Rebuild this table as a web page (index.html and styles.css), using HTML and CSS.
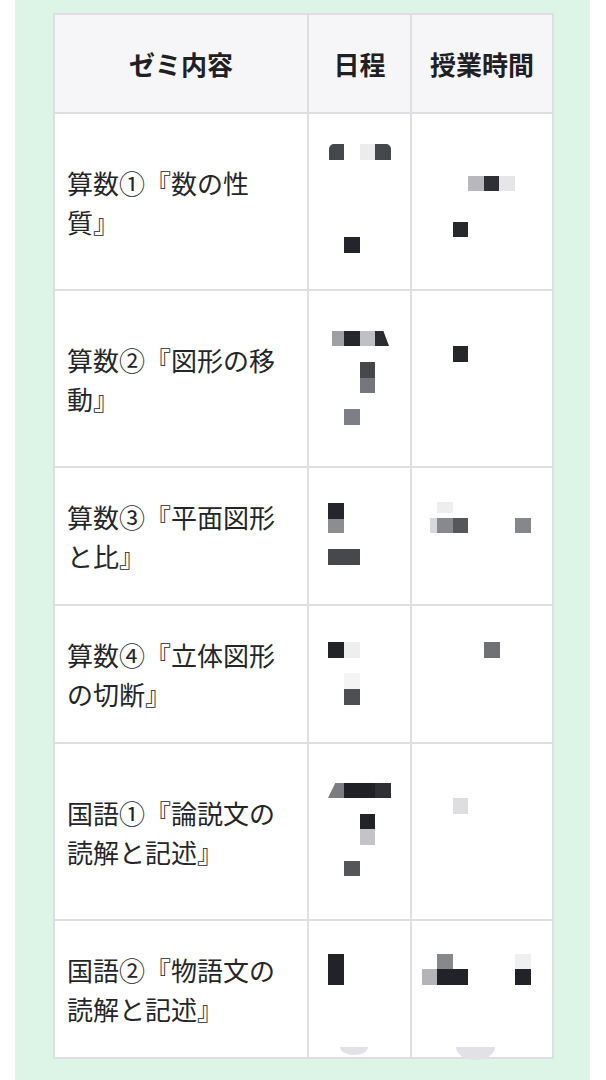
FILE: index.html
```html
<!DOCTYPE html>
<html lang="ja">
<head>
<meta charset="utf-8">
<link rel="stylesheet" href="styles.css">
</head>
<body>
<div class="page">
  <div class="panel">
    <table class="zemi">
      <colgroup>
        <col class="c1">
        <col class="c2">
        <col class="c3">
      </colgroup>
      <thead>
        <tr><th>ゼミ内容</th><th>日程</th><th>授業時間</th></tr>
      </thead>
      <tbody>
        <tr class="tall"><td>算数①『数の性質』</td><td></td><td></td></tr>
        <tr class="tall"><td>算数②『図形の移動』</td><td></td><td></td></tr>
        <tr><td>算数③『平面図形と比』</td><td></td><td></td></tr>
        <tr><td>算数④『立体図形の切断』</td><td></td><td></td></tr>
        <tr class="tall"><td>国語①『論説文の読解と記述』</td><td></td><td></td></tr>
        <tr><td>国語②『物語文の読解と記述』</td><td></td><td></td></tr>
      </tbody>
    </table>
  </div>
  <div class="mosaic" aria-hidden="true">
    <i class="m" style="left:329px;top:144px;width:15px;height:16px;background:#45484c;border-top-left-radius:5px"></i>
    <i class="m" style="left:360px;top:144px;width:15px;height:16px;background:#ececec"></i>
    <i class="m" style="left:375px;top:144px;width:16px;height:16px;background:#45484c;border-top-right-radius:5px"></i>
    <i class="m" style="left:344px;top:237px;width:16px;height:16px;background:#23252a"></i>
    <i class="m" style="left:468px;top:176px;width:16px;height:15px;background:#b8b8bc"></i>
    <i class="m" style="left:484px;top:176px;width:15px;height:15px;background:#2e3035"></i>
    <i class="m" style="left:499px;top:176px;width:16px;height:15px;background:#e6e6e8"></i>
    <i class="m" style="left:453px;top:222px;width:15px;height:15px;background:#26282c"></i>

    <i class="m" style="left:332px;top:331px;width:12px;height:15px;background:#a0a0a4"></i>
    <i class="m" style="left:344px;top:331px;width:16px;height:15px;background:#25272c"></i>
    <i class="m" style="left:360px;top:331px;width:15px;height:15px;background:#c0c0c4"></i>
    <i class="m slant-r" style="left:375px;top:331px;width:14px;height:15px;background:#2a2c30"></i>
    <i class="m" style="left:360px;top:362px;width:15px;height:16px;background:#46484c"></i>
    <i class="m" style="left:360px;top:378px;width:15px;height:15px;background:#76777c"></i>
    <i class="m" style="left:344px;top:409px;width:16px;height:16px;background:#7e7f84"></i>
    <i class="m" style="left:453px;top:346px;width:15px;height:16px;background:#25272b"></i>

    <i class="m" style="left:328px;top:503px;width:16px;height:16px;background:#24262b"></i>
    <i class="m" style="left:328px;top:519px;width:16px;height:14px;background:#8c8d91"></i>
    <i class="m" style="left:328px;top:549px;width:32px;height:16px;background:#46484c"></i>
    <i class="m" style="left:437px;top:502px;width:16px;height:11px;background:#eeeeee"></i>
    <i class="m" style="left:430px;top:518px;width:7px;height:15px;background:#d8d8dc"></i>
    <i class="m" style="left:437px;top:518px;width:16px;height:15px;background:#88898d"></i>
    <i class="m" style="left:453px;top:518px;width:15px;height:15px;background:#55575b"></i>
    <i class="m" style="left:515px;top:518px;width:16px;height:15px;background:#86878b"></i>

    <i class="m" style="left:328px;top:642px;width:16px;height:16px;background:#222428"></i>
    <i class="m" style="left:344px;top:642px;width:16px;height:16px;background:#eeeeef"></i>
    <i class="m" style="left:344px;top:673px;width:16px;height:16px;background:#f4f4f4"></i>
    <i class="m" style="left:344px;top:689px;width:16px;height:16px;background:#4d4f53"></i>
    <i class="m" style="left:484px;top:642px;width:16px;height:16px;background:#707175"></i>

    <i class="m slant-l" style="left:328px;top:783px;width:16px;height:15px;background:#7c7d80"></i>
    <i class="m" style="left:344px;top:783px;width:31px;height:15px;background:#1f2126"></i>
    <i class="m" style="left:375px;top:783px;width:16px;height:15px;background:#2e3035"></i>
    <i class="m" style="left:360px;top:814px;width:15px;height:15px;background:#222428"></i>
    <i class="m" style="left:360px;top:829px;width:15px;height:16px;background:#c4c4c6"></i>
    <i class="m" style="left:344px;top:861px;width:16px;height:15px;background:#55565a"></i>
    <i class="m" style="left:453px;top:798px;width:15px;height:16px;background:#dedee0"></i>

    <i class="m" style="left:328px;top:954px;width:16px;height:31px;background:#212328"></i>
    <i class="m" style="left:437px;top:954px;width:16px;height:15px;background:#87888c"></i>
    <i class="m" style="left:422px;top:969px;width:15px;height:16px;background:#b4b4b8"></i>
    <i class="m" style="left:437px;top:969px;width:31px;height:16px;background:#212328"></i>
    <i class="m" style="left:515px;top:954px;width:16px;height:15px;background:#f0f0f2"></i>
    <i class="m" style="left:515px;top:969px;width:16px;height:16px;background:#212328"></i>

    <i class="m bump" style="left:340px;top:1047px;width:28px;height:8px"></i>
    <i class="m bump" style="left:456px;top:1047px;width:39px;height:13px"></i>
  </div>
</div>
</body>
</html>
```

FILE: styles.css
```css
html, body {
  margin: 0;
  padding: 0;
  background: #ffffff;
}

body {
  font-family: "Noto Sans CJK JP", "Noto Sans", sans-serif;
  color: #222326;
  text-spacing-trim: space-all;
}

.page {
  position: relative;
  width: 606px;
  height: 1080px;
  overflow: hidden;
  padding: 0 16px 0 15px;
  box-sizing: border-box;
}

.panel {
  background: #dcf5e7;
  height: 100%;
  padding: 13px 38px 0 38px;
  box-sizing: border-box;
}

.zemi {
  width: 499px;
  border-collapse: collapse;
  table-layout: fixed;
  background: #ffffff;
}

.zemi col.c1 { width: 254px; }
.zemi col.c2 { width: 103px; }
.zemi col.c3 { width: 142px; }

.zemi th,
.zemi td {
  border: 2px solid #dedee3;
  padding: 29px 12px;
  font-size: 26px;
  line-height: 39px;
  vertical-align: middle;
  text-align: left;
  text-spacing-trim: space-all;
}

.zemi th {
  background: #f6f6f8;
  font-weight: 700;
  text-align: center;
  padding-left: 4px;
  padding-right: 4px;
  color: #1f2023;
}

.zemi td {
  font-weight: 400;
  color: #25262a;
  height: 78px;
}

.zemi tr.tall td {
  height: 117px;
}

.mosaic {
  position: absolute;
  left: 0;
  top: 0;
  width: 606px;
  height: 1080px;
  pointer-events: none;
}

.m {
  position: absolute;
  display: block;
}

.slant-r {
  clip-path: polygon(0 0, 60% 0, 100% 100%, 0 100%);
}

.slant-l {
  clip-path: polygon(45% 0, 100% 0, 100% 100%, 0 100%);
}

.bump {
  background: #e1e1e6;
  border-radius: 0 0 50% 50% / 0 0 100% 100%;
}
```
